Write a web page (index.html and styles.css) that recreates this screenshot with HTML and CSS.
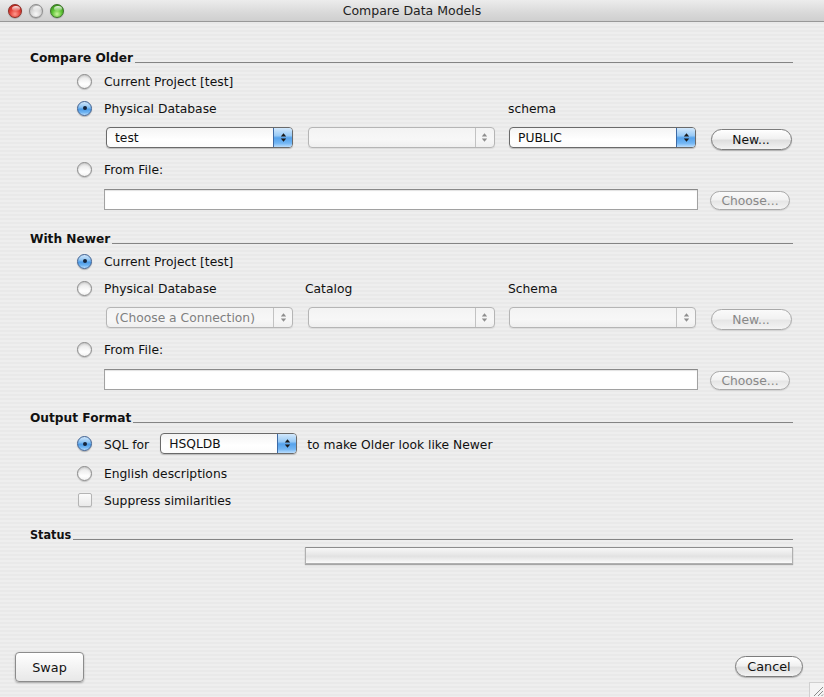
FILE: index.html
```html
<!DOCTYPE html>
<html>
<head>
<meta charset="utf-8">
<title>Compare Data Models</title>
<link rel="stylesheet" href="styles.css">
</head>
<body>
<div class="window">
  <header class="titlebar">
    <div class="lights">
      <span class="light light-close"></span>
      <span class="light light-min"></span>
      <span class="light light-max"></span>
    </div>
    <div class="title">Compare Data Models</div>
    <div class="titlebar-spacer"></div>
  </header>

  <main class="content">
    <section class="group group-older">
      <div class="group-head"><span class="group-title">Compare Older</span><span class="rule"></span></div>
      <div class="row row-first"><span class="radio"></span><span class="label">Current Project [test]</span></div>
      <div class="row row-cols"><span class="radio checked"></span><span class="label">Physical Database</span><span class="label"></span><span class="label">schema</span></div>
      <div class="row-combo">
        <div class="select active"><span class="select-value">test</span><span class="select-arrows"><svg width="7" height="11" viewBox="0 0 7 11"><path d="M3.5 1.2 L6.2 4.6 H0.8Z M3.5 9.8 L6.2 6.4 H0.8Z"/></svg></span></div>
        <div class="select disabled"><span class="select-value"></span><span class="select-arrows"><svg width="7" height="11" viewBox="0 0 7 11"><path d="M3.5 1.2 L6.2 4.6 H0.8Z M3.5 9.8 L6.2 6.4 H0.8Z"/></svg></span></div>
        <div class="select active"><span class="select-value">PUBLIC</span><span class="select-arrows"><svg width="7" height="11" viewBox="0 0 7 11"><path d="M3.5 1.2 L6.2 4.6 H0.8Z M3.5 9.8 L6.2 6.4 H0.8Z"/></svg></span></div>
        <button class="pill pill-new">New...</button>
      </div>
      <div class="row row-file"><span class="radio"></span><span class="label">From File:</span></div>
      <div class="row-field"><div class="textfield"></div><button class="pill pill-choose disabled">Choose...</button></div>
    </section>

    <section class="group group-newer">
      <div class="group-head"><span class="group-title">With Newer</span><span class="rule"></span></div>
      <div class="row row-first"><span class="radio checked"></span><span class="label">Current Project [test]</span></div>
      <div class="row row-cols"><span class="radio"></span><span class="label">Physical Database</span><span class="label">Catalog</span><span class="label">Schema</span></div>
      <div class="row-combo">
        <div class="select disabled"><span class="select-value">(Choose a Connection)</span><span class="select-arrows"><svg width="7" height="11" viewBox="0 0 7 11"><path d="M3.5 1.2 L6.2 4.6 H0.8Z M3.5 9.8 L6.2 6.4 H0.8Z"/></svg></span></div>
        <div class="select disabled"><span class="select-value"></span><span class="select-arrows"><svg width="7" height="11" viewBox="0 0 7 11"><path d="M3.5 1.2 L6.2 4.6 H0.8Z M3.5 9.8 L6.2 6.4 H0.8Z"/></svg></span></div>
        <div class="select disabled"><span class="select-value"></span><span class="select-arrows"><svg width="7" height="11" viewBox="0 0 7 11"><path d="M3.5 1.2 L6.2 4.6 H0.8Z M3.5 9.8 L6.2 6.4 H0.8Z"/></svg></span></div>
        <button class="pill pill-new disabled">New...</button>
      </div>
      <div class="row row-file"><span class="radio"></span><span class="label">From File:</span></div>
      <div class="row-field"><div class="textfield"></div><button class="pill pill-choose disabled">Choose...</button></div>
    </section>

    <section class="group group-output">
      <div class="group-head"><span class="group-title">Output Format</span><span class="rule"></span></div>
      <div class="row row-sql"><span class="radio checked"></span><span class="label">SQL for</span>
        <div class="select active select-sql"><span class="select-value">HSQLDB</span><span class="select-arrows"><svg width="7" height="11" viewBox="0 0 7 11"><path d="M3.5 1.2 L6.2 4.6 H0.8Z M3.5 9.8 L6.2 6.4 H0.8Z"/></svg></span></div>
        <span class="label">to make Older look like Newer</span>
      </div>
      <div class="row row-english"><span class="radio"></span><span class="label">English descriptions</span></div>
      <div class="row row-suppress"><span class="checkbox"></span><span class="label">Suppress similarities</span></div>
    </section>

    <section class="group group-status">
      <div class="group-head"><span class="group-title status-title">Status</span><span class="rule"></span></div>
      <div class="progress"></div>
    </section>
  </main>

  <footer class="footer">
    <button class="bevel">Swap</button>
    <button class="pill pill-cancel">Cancel</button>
  </footer>
  <div class="grip"><svg width="13" height="13" viewBox="0 0 13 13"><path d="M12 3 L3 12 M12 7 L7 12 M12 10.5 L10.5 12" stroke="#8a8a8a" stroke-width="1" fill="none"/></svg></div>
</div>
</body>
</html>
```

FILE: styles.css
```css
* { box-sizing: border-box; }

html, body {
  margin: 0;
  padding: 0;
}

body {
  width: 824px;
  height: 697px;
  overflow: hidden;
  font-family: "DejaVu Sans", "Liberation Sans", sans-serif;
  font-size: 12.3px;
  color: #111;
}

.window {
  position: relative;
  width: 824px;
  height: 697px;
  display: flex;
  flex-direction: column;
  background: repeating-linear-gradient(#eeeeee 0px, #eeeeee 2px, #e9e9e9 2px, #e9e9e9 4px);
}

/* ---------- title bar ---------- */
.titlebar {
  height: 22px;
  flex: none;
  display: grid;
  grid-template-columns: 1fr auto 1fr;
  align-items: center;
  background: linear-gradient(#ececec, #d9d9d9 60%, #cfcfcf);
  border-bottom: 1px solid #999;
}

.lights {
  display: flex;
  gap: 7px;
  padding-left: 8px;
}

.light {
  position: relative;
  width: 14px;
  height: 14px;
  border-radius: 50%;
  box-shadow: 0 0.5px 1px rgba(0,0,0,.35);
}

.light::after {
  content: "";
  position: absolute;
  left: 3px;
  top: 1px;
  width: 8px;
  height: 5px;
  border-radius: 50%;
  background: linear-gradient(rgba(255,255,255,.9), rgba(255,255,255,.1));
}

.light-close {
  background: radial-gradient(circle at 50% 75%, #ff9a8e 0%, #e5453c 45%, #a61b14 100%);
  border: 1px solid #8e2a22;
}

.light-min {
  background: radial-gradient(circle at 50% 75%, #f8f8f8 0%, #d4d4d4 50%, #a8a8a8 100%);
  border: 1px solid #8e8e8e;
}

.light-max {
  background: radial-gradient(circle at 50% 75%, #c9f59c 0%, #5cc334 45%, #2b7d13 100%);
  border: 1px solid #3b7326;
}

.title {
  font-size: 12.5px;
  color: #222;
  line-height: 21px;
}

/* ---------- content ---------- */
.content {
  flex: 1;
  padding: 25px 31px 0 30px;
}

.group-head {
  display: flex;
  height: 20px;
}

.group-title {
  font-weight: bold;
  font-size: 12.2px;
  line-height: 18px;
  padding-top: 2px;
  height: 20px;
  color: #111;
}

.status-title {
  font-family: "DejaVu Sans Condensed", "DejaVu Sans", sans-serif;
  font-stretch: condensed;
  font-size: 12.5px;
}

.rule {
  flex: 1;
  height: 16px;
  margin-left: 2px;
  border-bottom: 1px solid #858585;
}

.group-newer { margin-top: 18px; }
.group-output { margin-top: 17px; }
.group-status { margin-top: 14px; }

.row {
  display: flex;
  align-items: center;
  height: 20px;
  margin-left: 47px;
  margin-top: 7px;
}

.row .radio,
.row .checkbox { margin-right: 12px; }

.row-first { margin-top: 4px; }
.group-newer .row-first { margin-top: 3px; }
.row-file { margin-top: 11px; }

.row-cols {
  display: grid;
  grid-template-columns: 27px 201px 203px auto;
  align-items: center;
}

.label {
  line-height: 18px;
  padding-top: 2px;
  height: 20px;
  white-space: nowrap;
}

/* ---------- radio / checkbox ---------- */
.radio {
  position: relative;
  flex: none;
  width: 15px;
  height: 15px;
  border-radius: 50%;
  border: 1px solid #8a8a8a;
  background: linear-gradient(#e4e4e4, #ffffff 70%, #f2f2f2);
  box-shadow: 0 1px 1px rgba(0,0,0,.18), inset 0 1px 2px rgba(0,0,0,.15);
}

.radio.checked {
  border-color: #3d5f90;
  background: linear-gradient(#cfe6fb 0%, #8cc2f2 40%, #4b9ae6 55%, #6fb4f2 80%, #b8dcfc 100%);
  box-shadow: 0 1px 1px rgba(0,0,0,.25);
}

.radio.checked::after {
  content: "";
  position: absolute;
  left: 4.5px;
  top: 4.5px;
  width: 4px;
  height: 4px;
  border-radius: 50%;
  background: #15243a;
}

.checkbox {
  flex: none;
  width: 14px;
  height: 14px;
  margin-left: 1px;
  border-radius: 2px;
  border: 1px solid #b4b4b4;
  background: linear-gradient(#fbfbfb, #e9e9e9);
  box-shadow: 0 1px 1px rgba(0,0,0,.08);
}

.row-suppress .checkbox { margin-right: 12px; }

/* ---------- selects ---------- */
.row-combo {
  display: flex;
  align-items: flex-start;
  gap: 14.5px;
  margin-top: 9px;
  margin-left: 76px;
  height: 21px;
}

.select {
  display: flex;
  width: 187px;
  height: 21px;
  border: 1px solid #8a8a8a;
  border-radius: 4px;
  background: linear-gradient(#f4f4f4, #ffffff 60%, #fbfbfb);
  box-shadow: 0 1px 1px rgba(0,0,0,.2);
  overflow: hidden;
}

.select-value {
  flex: 1;
  padding-left: 8px;
  line-height: 19px;
  padding-top: 1px;
  white-space: nowrap;
  overflow: hidden;
}

.select-arrows {
  flex: none;
  width: 19px;
  display: flex;
  align-items: center;
  justify-content: center;
  border-left: 1px solid #8a8a8a;
}

.select-arrows svg { fill: #1a1a1a; }

.select.active {
  border-color: #6a6a6a;
}

.select.active .select-arrows {
  border-left-color: #3d6aa5;
  background: linear-gradient(#d2e8fc 0%, #98caf6 40%, #55a2ec 52%, #72b6f4 80%, #bcdefd 100%);
}

.select.disabled {
  border-color: #b5b5b5;
  background: linear-gradient(#f3f3f3, #f7f7f7 60%, #efefef);
  box-shadow: 0 1px 1px rgba(0,0,0,.08);
  color: #808080;
}

.select.disabled .select-arrows { border-left-color: #c2c2c2; }
.select.disabled .select-arrows svg { fill: #8e8e8e; }

.row-sql {
  height: 21px;
  margin-top: 6px;
}

.select-sql {
  width: 137px;
  margin-left: 11px;
  margin-right: 10px;
}

.row-english { margin-top: 9px; }

/* ---------- buttons ---------- */
button {
  font-family: inherit;
  font-size: 12.3px;
  color: #111;
  padding: 0;
  cursor: default;
}

.pill {
  height: 21px;
  border: 1px solid #7c7c7c;
  border-radius: 11px;
  background: linear-gradient(#ffffff 0%, #f1f1f1 45%, #dedede 55%, #f3f3f3 100%);
  box-shadow: 0 1px 1px rgba(0,0,0,.25);
}

.pill.disabled {
  color: #888;
  border-color: #a9a9a9;
  background: linear-gradient(#fafafa 0%, #f2f2f2 45%, #e6e6e6 55%, #f4f4f4 100%);
  box-shadow: 0 1px 1px rgba(0,0,0,.1);
}

.pill-new {
  width: 81px;
  margin-top: 2px;
}

.row-field {
  display: flex;
  align-items: flex-start;
  margin-top: 10px;
  margin-left: 74px;
  height: 21px;
}

.textfield {
  width: 594px;
  height: 21px;
  background: #fff;
  border: 1px solid #a2a2a2;
  border-top-color: #8a8a8a;
  box-shadow: inset 0 1px 1px rgba(0,0,0,.12);
}

.pill-choose {
  width: 80px;
  height: 19px;
  margin-left: 12px;
  margin-top: 2px;
}

/* ---------- status ---------- */
.progress {
  margin-top: 3px;
  margin-left: 275px;
  height: 17px;
  border: 1px solid #b0b0b0;
  border-top-color: #8c8c8c;
  background: linear-gradient(#f7f7f7 0%, #e9e9e9 40%, #e2e2e2 55%, #f2f2f2 85%, #fbfbfb 100%);
  box-shadow: 0 1px 1px rgba(0,0,0,.3);
}

/* ---------- footer ---------- */
.footer {
  flex: none;
  height: 52px;
  display: flex;
  justify-content: space-between;
  align-items: flex-start;
  padding: 7px 21px 0 15px;
}

.bevel {
  width: 69px;
  height: 30px;
  border: 1px solid #8c8c8c;
  border-radius: 4px;
  background: linear-gradient(#ffffff 0%, #f3f3f3 50%, #e8e8e8 100%);
  box-shadow: 0 1px 2px rgba(0,0,0,.3);
  font-size: 12.8px;
}

.pill-cancel {
  width: 68px;
  margin-top: 4px;
  font-size: 12.8px;
}

.grip {
  position: absolute;
  right: 0;
  bottom: 0;
  width: 15px;
  height: 15px;
  border-left: 1px solid #d0d0d0;
  border-top: 1px solid #d0d0d0;
  background: #f4f4f4;
  display: flex;
  align-items: flex-end;
  justify-content: flex-end;
}
```
